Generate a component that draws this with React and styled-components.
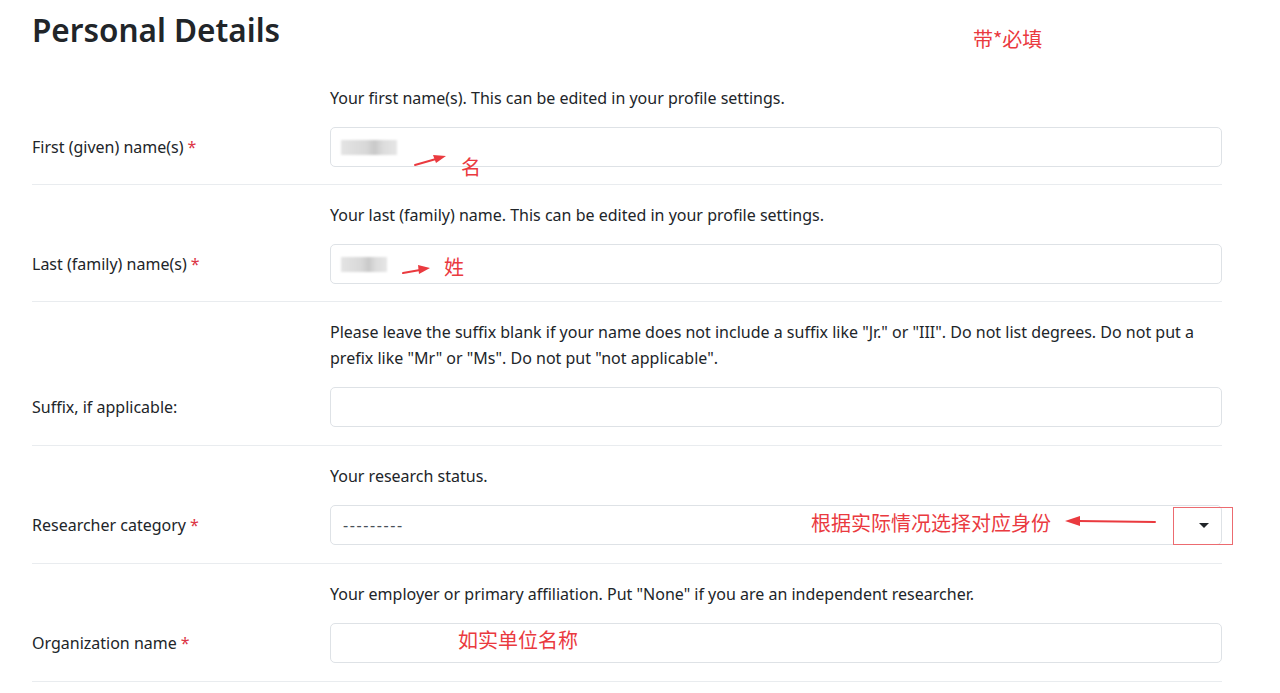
import styled, { createGlobalStyle } from "styled-components"

const GlobalStyle = createGlobalStyle`
  html, body {
    margin: 0;
    padding: 0;
    background: #fff;
    font-family: "Noto Sans", "Noto Sans CJK SC", sans-serif;
    color: #212529;
  }
`

const Page = styled.div`
  position: relative;
  padding: 0 58px 0 32px;
`

const Title = styled.h1`
  margin: 0 0 19px;
  padding-top: 11px;
  font-size: 31.5px;
  line-height: 38px;
  font-weight: 600;
  color: #212529;
`

const Row = styled.div`
  display: grid;
  grid-template-columns: 298px 1fr;
  grid-template-rows: auto 40px;
  row-gap: 16px;
  padding: 17px 0 ${p => (p.$tall ? 18 : 17)}px;
  border-bottom: 1px solid #e9ecef;
`

const Help = styled.div`
  grid-column: 2;
  grid-row: 1;
  font-size: 16px;
  line-height: 26px;
`

const Label = styled.label`
  grid-column: 1;
  grid-row: 2;
  align-self: center;
  font-size: 16px;
`

const Star = styled.span`
  color: #dc3545;
  margin-left: 4px;
`

const Field = styled.div`
  grid-column: 2;
  grid-row: 2;
  position: relative;
  display: flex;
  align-items: center;
  padding: 0 12px 0 10px;
  border: 1px solid #dee2e6;
  border-radius: 5px;
  font-size: 16px;
  color: #495057;
`

const Blur = styled.div`
  width: ${p => p.w}px;
  height: 15px;
  background: linear-gradient(90deg, #e4e4e4 0%, #d8d8d8 45%, #c9c9c9 60%, #dcdcdc 75%, #e6e6e6 100%);
  filter: blur(1px);
`

const Placeholder = styled.span`
  letter-spacing: 1.6px;
  margin-left: 2px;
`

const Caret = styled.span`
  margin-left: auto;
  width: 0;
  height: 0;
  border-left: 5px solid transparent;
  border-right: 5px solid transparent;
  border-top: 5px solid #212529;
`

const Note = styled.span`
  position: absolute;
  left: ${p => p.x}px;
  top: ${p => p.y}px;
  color: #ea3a3f;
  font-family: "Noto Sans CJK SC", sans-serif;
  font-size: 20px;
  line-height: 1;
  white-space: nowrap;
`

const Overlay = styled.svg`
  position: absolute;
  left: 0;
  top: 0;
  pointer-events: none;
`

const RedBox = styled.div`
  position: absolute;
  right: -12px;
  top: 1px;
  width: 60px;
  height: 38px;
  box-sizing: border-box;
  border: 1px solid #ec6b70;
`

export default function App() {
  return (
    <Page>
      <GlobalStyle />
      <Title>Personal Details</Title>

      <Row>
        <Help>Your first name(s). This can be edited in your profile settings.</Help>
        <Label>First (given) name(s)<Star>*</Star></Label>
        <Field><Blur w={56} /></Field>
      </Row>

      <Row>
        <Help>Your last (family) name. This can be edited in your profile settings.</Help>
        <Label>Last (family) name(s)<Star>*</Star></Label>
        <Field><Blur w={46} /></Field>
      </Row>

      <Row $tall>
        <Help>
          Please leave the suffix blank if your name does not include a suffix like "Jr." or "III". Do not list degrees. Do not put a prefix like "Mr" or "Ms". Do not put "not applicable".
        </Help>
        <Label>Suffix, if applicable:</Label>
        <Field />
      </Row>

      <Row $tall>
        <Help>Your research status.</Help>
        <Label>Researcher category<Star>*</Star></Label>
        <Field>
          <Placeholder>---------</Placeholder>
          <Caret />
          <RedBox />
        </Field>
      </Row>

      <Row $tall>
        <Help>Your employer or primary affiliation. Put "None" if you are an independent researcher.</Help>
        <Label>Organization name<Star>*</Star></Label>
        <Field />
      </Row>

      <Note x={973} y={29}>带*必填</Note>
      <Note x={461} y={157}>名</Note>
      <Note x={444} y={257}>姓</Note>
      <Note x={811} y={513}>根据实际情况选择对应身份</Note>
      <Note x={458} y={630}>如实单位名称</Note>

      <Overlay width="1280" height="693" viewBox="0 0 1280 693">
        <g fill="#ea3a3f" stroke="#ea3a3f" strokeLinecap="round">
          <line x1="415" y1="165" x2="436" y2="159" strokeWidth="2" />
          <polygon points="446,156 433,155 436,163" stroke="none" />
          <line x1="403" y1="273" x2="420" y2="270" strokeWidth="2" />
          <polygon points="430,268 418,265 419,274" stroke="none" />
          <line x1="1155" y1="522" x2="1078" y2="521" strokeWidth="2" />
          <polygon points="1065,521 1080,516 1080,526" stroke="none" />
        </g>
      </Overlay>
    </Page>
  )
}
